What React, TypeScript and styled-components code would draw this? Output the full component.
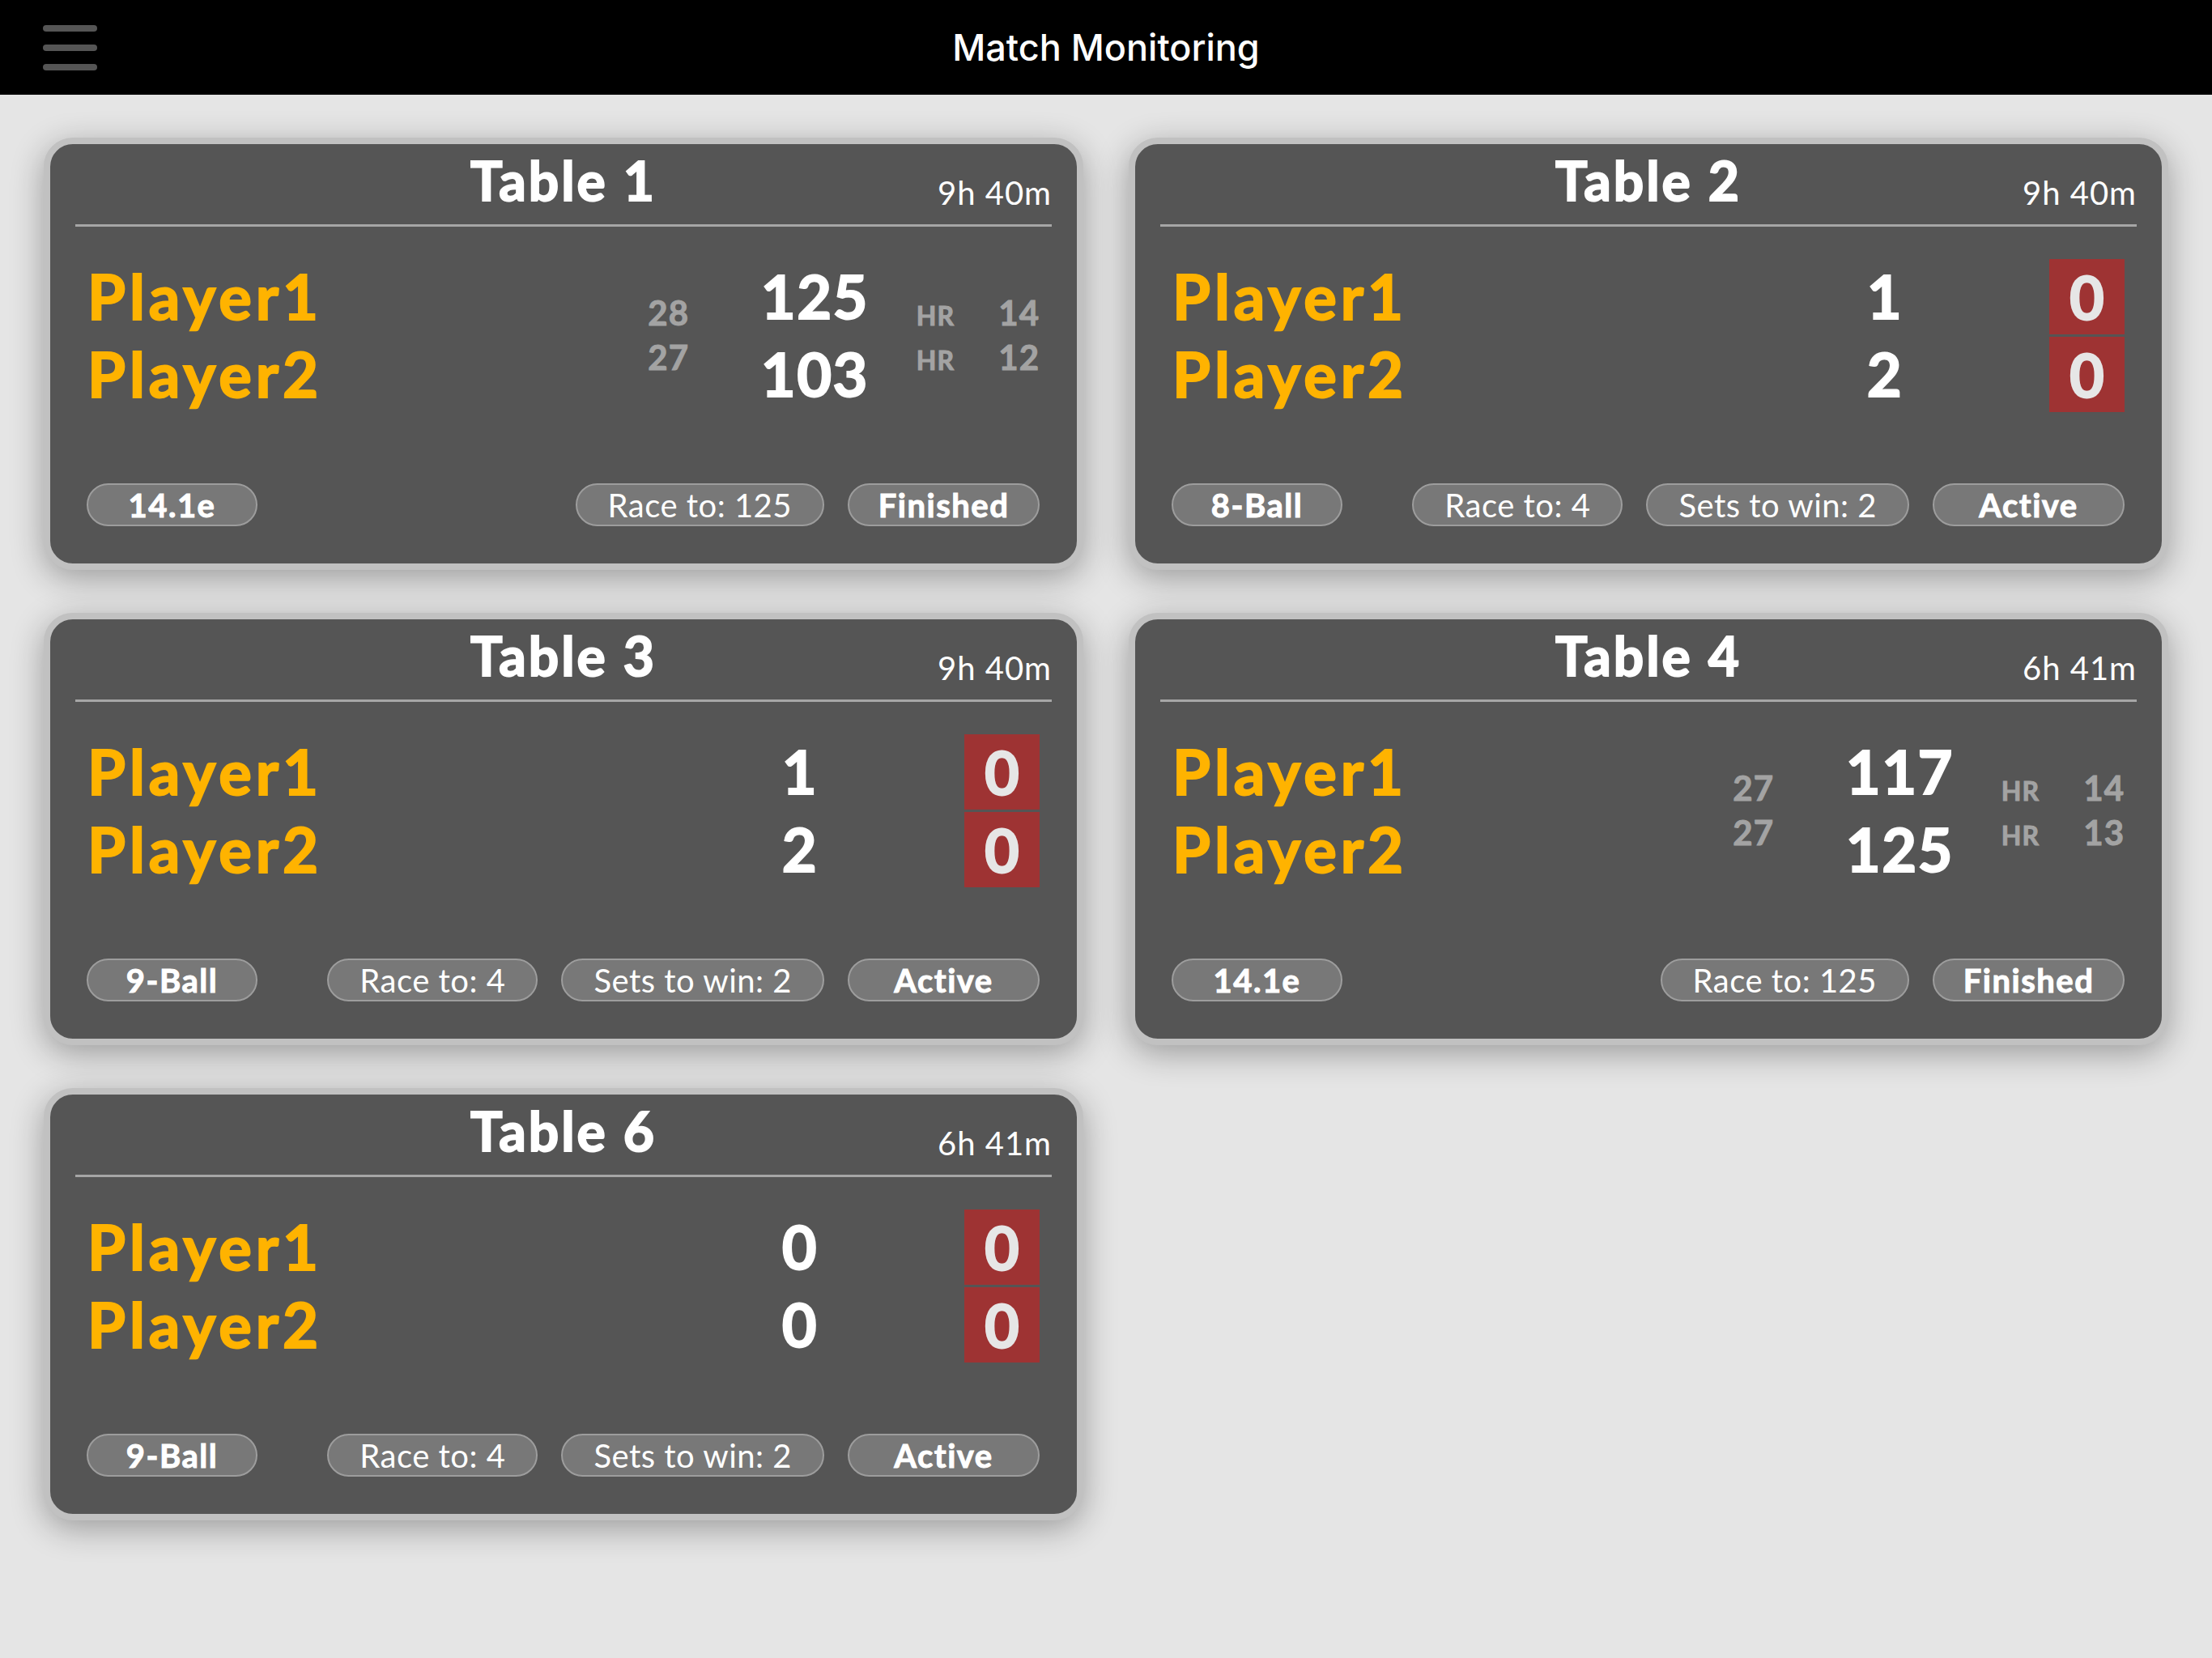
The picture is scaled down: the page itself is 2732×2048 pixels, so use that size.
import React from 'react';
import styled, { createGlobalStyle } from 'styled-components';

const GlobalStyle = createGlobalStyle`
  html, body {
    margin: 0;
    padding: 0;
    background: #e5e5e5;
  }
  body {
    min-height: 100vh;
    font-family: 'Lato', 'Liberation Sans', sans-serif;
  }
`;

const Page = styled.div`
  min-height: 100vh;
  background: #e5e5e5;
`;

const TopBar = styled.header`
  height: 117px;
  background: #000;
  display: grid;
  grid-template-columns: 1fr auto 1fr;
  align-items: center;
  padding: 0 53px;
`;

const MenuButton = styled.div`
  display: flex;
  align-items: center;
`;

const TopTitle = styled.h1`
  margin: 0;
  font-family: 'Inter', 'Liberation Sans', sans-serif;
  font-weight: 500;
  font-size: 45px;
  color: #fff;
`;

const Grid = styled.main`
  display: grid;
  grid-template-columns: 1fr 1fr;
  gap: 53px 56px;
  padding: 53px 54px;
  align-items: start;
`;

const Card = styled.section`
  background: #555555;
  border: 8px solid #c1c1c1;
  border-radius: 36px;
  box-shadow: 0 10px 40px rgba(0, 0, 0, 0.32);
  display: flex;
  flex-direction: column;
  color: #fff;
`;

const CardHead = styled.div`
  display: grid;
  grid-template-columns: 1fr auto 1fr;
  align-items: end;
  padding: 13px 31px 0;
`;

const TableName = styled.h2`
  grid-column: 2;
  margin: 0;
  font-size: 66px;
  line-height: 64px;
  font-weight: 700;
  letter-spacing: 3px;
  -webkit-text-stroke: 2px currentColor;
`;

const Elapsed = styled.span`
  grid-column: 3;
  justify-self: end;
  font-size: 40px;
  line-height: 38px;
  margin-bottom: -2px;
  letter-spacing: 1px;
`;

const Divider = styled.hr`
  margin: 22px 31px 0;
  height: 3px;
  border: none;
  background: #a6a6a6;
`;

const Body = styled.div`
  display: flex;
  margin-top: 38px;
  padding: 0 46px 0 46px;
`;

const NameCol = styled.div`
  flex: 1;
  display: flex;
  flex-direction: column;
`;

const Name = styled.div`
  height: 96px;
  line-height: 96px;
  font-size: 76px;
  font-weight: 700;
  color: #ffb300;
  letter-spacing: 5px;
  -webkit-text-stroke: 2px currentColor;
`;

const ScoreCol = styled.div<{ $width: number; $align: 'right' | 'center' }>`
  width: ${p => p.$width}px;
  text-align: ${p => p.$align};
  display: flex;
  flex-direction: column;
`;

const Score = styled.div`
  height: 96px;
  line-height: 96px;
  font-size: 74px;
  font-weight: 700;
  letter-spacing: 1.5px;
  -webkit-text-stroke: 2px currentColor;
`;

const StatCol = styled.div<{ $width: number }>`
  width: ${p => p.$width}px;
  display: flex;
  flex-direction: column;
  justify-content: center;
  align-items: flex-end;
`;

const StatLine = styled.div`
  height: 55px;
  line-height: 55px;
  display: flex;
  align-items: baseline;
  justify-content: flex-end;
  color: #a3a3a3;
  font-weight: 700;
  -webkit-text-stroke: 1px currentColor;
`;

const StatNum = styled.span<{ $width?: number }>`
  font-size: 42px;
  text-align: right;
  letter-spacing: 1px;
  width: ${p => (p.$width ? `${p.$width}px` : 'auto')};
`;

const HrLabel = styled.span`
  font-size: 32px;
  text-align: right;
  width: 106px;
  letter-spacing: 1px;
`;

const FrameCol = styled.div`
  margin-left: 103px;
  display: flex;
  flex-direction: column;
  align-items: center;
`;

const FrameBox = styled.div`
  width: 93px;
  height: 93px;
  margin: 1.5px 0;
  background: #9e3333;
  color: #e6e6e6;
  display: flex;
  align-items: center;
  justify-content: center;
  font-size: 74px;
  font-weight: 700;
  -webkit-text-stroke: 2px currentColor;
`;

const Footer = styled.div`
  display: flex;
  align-items: center;
  gap: 29px;
  margin-top: 87px;
  padding: 0 46px 46px 45px;
`;

const Spacer = styled.div`
  flex: 1;
`;

type ChipKind = 'game' | 'info' | 'status';

const Chip = styled.div<{ $kind: ChipKind }>`
  box-sizing: border-box;
  height: 53px;
  border-radius: 27px;
  border: 2px solid #9d9d9d;
  background: #787878;
  color: #fff;
  display: flex;
  align-items: center;
  justify-content: center;
  font-size: 40px;
  white-space: nowrap;
  font-weight: ${p => (p.$kind === 'info' ? 400 : 700)};
  width: ${p => (p.$kind === 'game' ? '211px' : p.$kind === 'status' ? '237px' : 'auto')};
  padding: ${p => (p.$kind === 'info' ? '0 38px' : '0')};
  letter-spacing: ${p => (p.$kind === 'info' ? '0.5px' : '1.5px')};
  -webkit-text-stroke: ${p => (p.$kind === 'info' ? '0' : '1px currentColor')};
`;

type Player = { name: string; score: number; avg?: number; hr?: number; sets?: number };

type Match = {
  table: string;
  time: string;
  kind: 'straight' | 'frames';
  players: Player[];
  game: string;
  info: string[];
  status: string;
};

const matches: Match[] = [
  {
    table: 'Table 1',
    time: '9h 40m',
    kind: 'straight',
    players: [
      { name: 'Player1', score: 125, avg: 28, hr: 14 },
      { name: 'Player2', score: 103, avg: 27, hr: 12 },
    ],
    game: '14.1e',
    info: ['Race to: 125'],
    status: 'Finished',
  },
  {
    table: 'Table 2',
    time: '9h 40m',
    kind: 'frames',
    players: [
      { name: 'Player1', score: 1, sets: 0 },
      { name: 'Player2', score: 2, sets: 0 },
    ],
    game: '8-Ball',
    info: ['Race to: 4', 'Sets to win: 2'],
    status: 'Active',
  },
  {
    table: 'Table 3',
    time: '9h 40m',
    kind: 'frames',
    players: [
      { name: 'Player1', score: 1, sets: 0 },
      { name: 'Player2', score: 2, sets: 0 },
    ],
    game: '9-Ball',
    info: ['Race to: 4', 'Sets to win: 2'],
    status: 'Active',
  },
  {
    table: 'Table 4',
    time: '6h 41m',
    kind: 'straight',
    players: [
      { name: 'Player1', score: 117, avg: 27, hr: 14 },
      { name: 'Player2', score: 125, avg: 27, hr: 13 },
    ],
    game: '14.1e',
    info: ['Race to: 125'],
    status: 'Finished',
  },
  {
    table: 'Table 6',
    time: '6h 41m',
    kind: 'frames',
    players: [
      { name: 'Player1', score: 0, sets: 0 },
      { name: 'Player2', score: 0, sets: 0 },
    ],
    game: '9-Ball',
    info: ['Race to: 4', 'Sets to win: 2'],
    status: 'Active',
  },
];

const MenuIcon = () => (
  <svg width="67" height="56" viewBox="0 0 67 56">
    <g stroke="#555" strokeWidth="8" strokeLinecap="round">
      <line x1="4" y1="4" x2="63" y2="4" />
      <line x1="4" y1="28" x2="63" y2="28" />
      <line x1="4" y1="52" x2="63" y2="52" />
    </g>
  </svg>
);

const MatchCard = ({ match }: { match: Match }) => (
  <Card>
    <CardHead>
      <TableName>{match.table}</TableName>
      <Elapsed>{match.time}</Elapsed>
    </CardHead>
    <Divider />
    <Body>
      <NameCol>
        {match.players.map(p => (
          <Name key={p.name}>{p.name}</Name>
        ))}
      </NameCol>
      {match.kind === 'straight' ? (
        <>
          <StatCol $width={80}>
            {match.players.map(p => (
              <StatLine key={p.name}>
                <StatNum>{p.avg}</StatNum>
              </StatLine>
            ))}
          </StatCol>
          <ScoreCol $width={222} $align="right">
            {match.players.map(p => (
              <Score key={p.name}>{p.score}</Score>
            ))}
          </ScoreCol>
          <StatCol $width={211}>
            {match.players.map(p => (
              <StatLine key={p.name}>
                <HrLabel>HR</HrLabel>
                <StatNum $width={105}>{p.hr}</StatNum>
              </StatLine>
            ))}
          </StatCol>
        </>
      ) : (
        <>
          <ScoreCol $width={200} $align="center">
            {match.players.map(p => (
              <Score key={p.name}>{p.score}</Score>
            ))}
          </ScoreCol>
          <FrameCol>
            {match.players.map(p => (
              <FrameBox key={p.name}>{p.sets}</FrameBox>
            ))}
          </FrameCol>
        </>
      )}
    </Body>
    <Footer>
      <Chip $kind="game">{match.game}</Chip>
      <Spacer />
      {match.info.map(i => (
        <Chip key={i} $kind="info">
          {i}
        </Chip>
      ))}
      <Chip $kind="status">{match.status}</Chip>
    </Footer>
  </Card>
);

const App = () => (
  <Page>
    <GlobalStyle />
    <TopBar>
      <MenuButton>
        <MenuIcon />
      </MenuButton>
      <TopTitle>Match Monitoring</TopTitle>
    </TopBar>
    <Grid>
      {matches.map(m => (
        <MatchCard key={m.table} match={m} />
      ))}
    </Grid>
  </Page>
);

export default App;
